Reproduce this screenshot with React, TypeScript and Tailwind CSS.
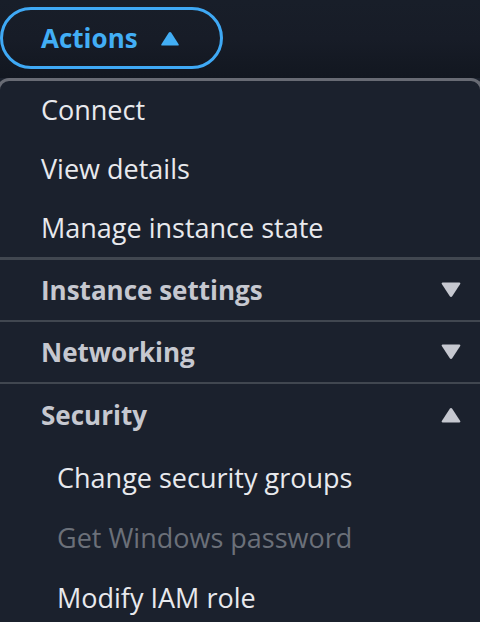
import { useState } from 'react'

type Item = { label: string; disabled?: boolean }

const topItems: Item[] = [
  { label: 'Connect' },
  { label: 'View details' },
  { label: 'Manage instance state' },
]

const securityItems: Item[] = [
  { label: 'Change security groups' },
  { label: 'Get Windows password', disabled: true },
  { label: 'Modify IAM role' },
]

function Caret({ up, className }: { up?: boolean; className?: string }) {
  return (
    <svg viewBox="0 0 20 16" className={className} fill="currentColor">
      {up ? (
        <path d="M10 1c.5 0 .9.3 1.2.7l8 12.3c.4.7 0 1.5-.8 1.5H1.6c-.8 0-1.2-.8-.8-1.5l8-12.3C9.1 1.3 9.5 1 10 1z" />
      ) : (
        <path d="M10 15c.5 0 .9-.3 1.2-.7l8-12.3c.4-.7 0-1.5-.8-1.5H1.6C.8.5.4 1.3.8 2l8 12.3c.3.4.7.7 1.2.7z" />
      )}
    </svg>
  )
}

function Section({ label, open, onToggle, last }: { label: string; open: boolean; onToggle: () => void; last?: boolean }) {
  return (
    <button
      onClick={onToggle}
      className={`flex h-[62px] w-full items-center justify-between pl-[41px] pr-[19px] text-left ${last ? '' : 'border-b-2 border-[#414750]'}`}
    >
      <span className="text-[26px] font-bold text-[#c6c8d0]">{label}</span>
      <Caret up={open} className="h-[16px] w-[20px] text-[#c6c8d0]" />
    </button>
  )
}

export default function App() {
  const [open, setOpen] = useState<string>('Security')

  return (
    <div
      className="h-[622px] w-[480px] overflow-hidden bg-[#1b212d]"
      style={{ fontFamily: '"Open Sans", "Noto Sans", sans-serif' }}
    >
      {/* trigger */}
      <div className="h-[78px] bg-gradient-to-b from-[#181e29] via-[#171c27] to-[#121720] pt-[7px]">
        <button className="flex h-[62px] w-[223px] items-center gap-[22px] rounded-full border-[3px] border-[#3fa9f5] pl-[38px]">
          <span className="text-[26px] font-bold text-[#42aef5]">Actions</span>
          <Caret up className="h-[15px] w-[20px] text-[#42aef5]" />
        </button>
      </div>

      {/* menu */}
      <div className="-mx-[3px] rounded-t-[12px] border-x-[3px] border-t-[3px] border-[#686b74] bg-[#1b212d]">
        <div className="-mx-[3px] h-[179px] border-b-[3px] border-[#414750] px-[3px]">
          {topItems.map((it) => (
            <div key={it.label} className="flex h-[59px] items-center pl-[41px] text-[27px] text-[#e8e9ed]">
              {it.label}
            </div>
          ))}
        </div>
        <div>
          <Section label="Instance settings" open={open === 'Instance settings'} onToggle={() => setOpen(open === 'Instance settings' ? '' : 'Instance settings')} />
          <Section label="Networking" open={open === 'Networking'} onToggle={() => setOpen(open === 'Networking' ? '' : 'Networking')} />
          <Section label="Security" open={open === 'Security'} onToggle={() => setOpen(open === 'Security' ? '' : 'Security')} last />
          {open === 'Security' && (
            <div className="pt-[2px]">
              {securityItems.map((it) => (
                <div
                  key={it.label}
                  className={`flex h-[60px] items-center pl-[57px] text-[27px] ${it.disabled ? 'text-[#6b7079]' : 'text-[#e8e9ed]'}`}
                >
                  {it.label}
                </div>
              ))}
            </div>
          )}
        </div>
      </div>
    </div>
  )
}
